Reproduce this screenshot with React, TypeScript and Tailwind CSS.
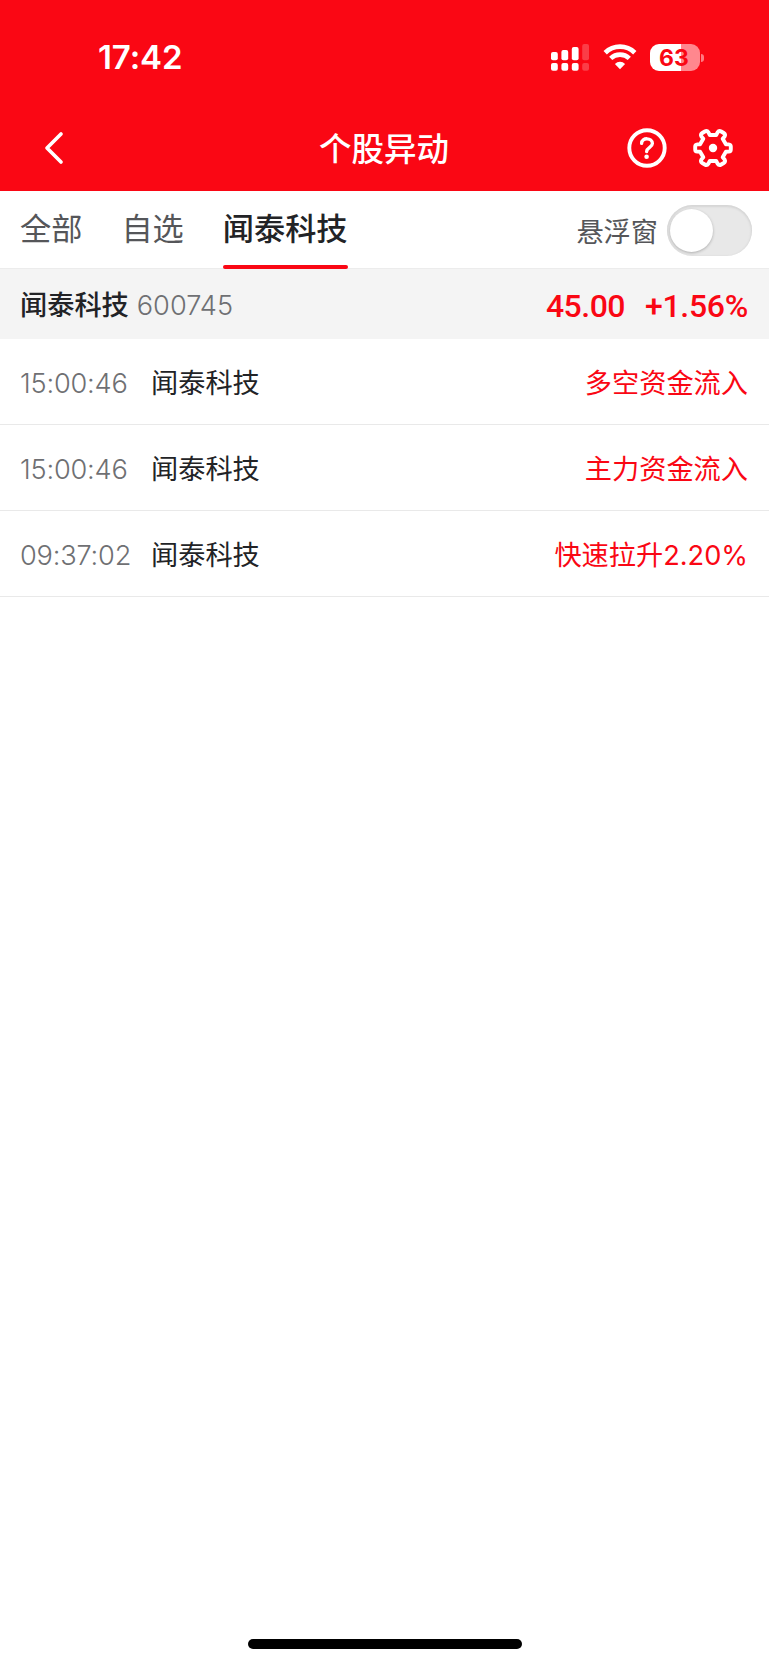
import { useState } from "react";

const tabs = ["全部", "自选", "闻泰科技"];

const events = [
  { time: "15:00:46", name: "闻泰科技", signal: "多空资金流入" },
  { time: "15:00:46", name: "闻泰科技", signal: "主力资金流入" },
  { time: "09:37:02", name: "闻泰科技", signal: "快速拉升2.20%" },
];

function SignalIcon() {
  return (
    <svg width="38" height="27" viewBox="0 0 38 27" fill="#fff">
      <rect x="0" y="8" width="6.8" height="8.2" rx="2" />
      <rect x="10.4" y="6" width="6.8" height="10.2" rx="2" />
      <rect x="20.8" y="3" width="6.8" height="13.2" rx="2" />
      <rect x="31.2" y="0" width="6.8" height="16.2" rx="2" opacity="0.22" />
      <rect x="0" y="19" width="6.8" height="7.8" rx="2" />
      <rect x="10.4" y="19" width="6.8" height="7.8" rx="2" />
      <rect x="20.8" y="19" width="6.8" height="7.8" rx="2" />
      <rect x="31.2" y="19" width="6.8" height="7.8" rx="2" opacity="0.22" />
    </svg>
  );
}

function WifiIcon() {
  return (
    <svg width="34" height="26" viewBox="0 0 34 26" fill="none">
      <path d="M2.2 8.7A21.3 21.3 0 0 1 31.8 8.7" stroke="#fff" strokeWidth="4.8" />
      <path d="M7.7 14.4A13.4 13.4 0 0 1 26.3 14.4" stroke="#fff" strokeWidth="4.6" />
      <path d="M17 25.2L11.9 19.9A7.3 7.3 0 0 1 22.1 19.9Z" fill="#fff" />
    </svg>
  );
}

function GearIcon() {
  return (
    <svg width="42" height="42" viewBox="-21 -21 42 42" fill="none">
      <path
        d="M-3.2 -13L3.2 -13L4.6 -15.6Q6 -17.8 8.2 -16.5L10.7 -15Q12.9 -13.6 11.6 -11.6L9.7 -9.3L12.9 -3.7L15.6 -3.6Q17.8 -3.4 17.8 -1.4L17.8 1.4Q17.8 3.4 15.6 3.6L12.9 3.7L9.7 9.3L11.6 11.6Q12.9 13.6 10.7 15L8.2 16.5Q6 17.8 4.6 15.6L3.2 13L-3.2 13L-4.6 15.6Q-6 17.8 -8.2 16.5L-10.7 15Q-12.9 13.6 -11.6 11.6L-9.7 9.3L-12.9 3.7L-15.6 3.6Q-17.8 3.4 -17.8 1.4L-17.8 -1.4Q-17.8 -3.4 -15.6 -3.6L-12.9 -3.7L-9.7 -9.3L-11.6 -11.6Q-12.9 -13.6 -10.7 -15L-8.2 -16.5Q-6 -17.8 -4.6 -15.6Z"
        stroke="#fff"
        strokeWidth="3.9"
        strokeLinejoin="round"
      />
      <circle r="4.2" fill="#fff" />
    </svg>
  );
}

function HelpIcon() {
  return (
    <svg width="42" height="42" viewBox="-21 -21 42 42" fill="none">
      <circle r="17.7" stroke="#fff" strokeWidth="3.9" />
      <path
        d="M-5.4 -4.6C-5.4 -10.8 5.4 -10.8 5.4 -4.4C5.4 -0.6 -0.2 -0.6 -0.4 3.6"
        stroke="#fff"
        strokeWidth="3.3"
        strokeLinecap="round"
      />
      <circle cx="-0.4" cy="8.8" r="2.3" fill="#fff" />
    </svg>
  );
}

function StatusBar() {
  return (
    <div className="flex h-[104px] items-start justify-between pl-[98px] pr-[65px] pt-[38px]">
      <span className="text-[33px] font-semibold leading-[38px] tracking-[-0.1px]">17:42</span>
      <div className="flex pt-[6px]">
        <SignalIcon />
        <div className="ml-[14px]">
          <WifiIcon />
        </div>
        <div className="ml-[13px] flex h-[27px] items-center">
          <div className="flex h-[27px] w-[50px] items-center justify-center rounded-[9px] bg-[linear-gradient(90deg,#fff_62%,#ff878e_62%)] pr-[2px] pt-px text-[23px] font-bold leading-none text-[#fa0714]">
            63
          </div>
          <div className="ml-[1px] h-[8px] w-[3px] rounded-r-full bg-[#ff7a82]" />
        </div>
      </div>
    </div>
  );
}

export default function App() {
  const [active, setActive] = useState("闻泰科技");
  const [floating, setFloating] = useState(false);

  return (
    <div className="flex h-[1665px] w-[769px] flex-col bg-white font-['Inter','Noto_Sans_CJK_SC',sans-serif] text-[#222326]">
      <header className="h-[191px] bg-[#fa0714] text-white">
        <StatusBar />
        <div className="grid h-[87px] grid-cols-[200px_1fr_200px] items-center">
          <button type="button" aria-label="返回" className="pl-[43px]">
            <svg width="22" height="34" viewBox="0 0 22 34" fill="none">
              <path d="M18 3L4 17L18 31" stroke="#fff" strokeWidth="3.7" strokeLinecap="round" strokeLinejoin="round" />
            </svg>
          </button>
          <h1 className="pr-px pt-[5px] text-center text-[32.5px] font-medium leading-[48px]">个股异动</h1>
          <div className="flex justify-end gap-6 pr-[35px]">
            <HelpIcon />
            <GearIcon />
          </div>
        </div>
      </header>

      <div className="flex h-[77px] items-stretch justify-between pl-5 pr-[17px]">
        <nav className="flex gap-[39px]">
          {tabs.map((tab) => (
            <button
              key={tab}
              type="button"
              onClick={() => setActive(tab)}
              className={`flex flex-col justify-between text-[31.2px] leading-[46px] ${
                active === tab ? "font-medium text-[#222326]" : "text-[#555659]"
              }`}
            >
              <span className="pt-[15px]">{tab}</span>
              {active === tab && <span className="relative -mb-px h-1 w-full rounded-[2px] bg-[#fa0714]" />}
            </button>
          ))}
        </nav>
        <div className="flex items-center gap-[9px] pt-px">
          <span className="pt-[5px] text-[27.2px] leading-10 text-[#555659]">悬浮窗</span>
          <button
            type="button"
            role="switch"
            aria-label="悬浮窗"
            aria-checked={floating}
            onClick={() => setFloating(!floating)}
            className={`flex h-[51px] w-[85px] items-center rounded-full px-[3px] shadow-[inset_0_1px_2px_1px_#d6d6d6] ${
              floating ? "justify-end bg-[#fa0714]" : "bg-[#e8e8e8]"
            }`}
          >
            <span className="h-[43px] w-[43px] rounded-full bg-white shadow-[0_1px_3px_rgba(0,0,0,0.25)]" />
          </button>
        </div>
      </div>

      <div className="flex h-[71px] items-center justify-between border-t border-[#ececec] bg-[#f4f4f4] pl-5 pr-[21px] pt-[3px]">
        <div className="flex items-center pt-px text-[27.2px]">
          <span className="font-medium">闻泰科技</span>
          <span className="ml-2 font-light text-[#6f7073]">600745</span>
        </div>
        <div className="flex gap-5 font-['Roboto',sans-serif] text-[32px] font-medium tracking-[-0.3px] text-[#fa0714]">
          <span className="tracking-[-0.5px]">45.00</span>
          <span>+1.56%</span>
        </div>
      </div>

      <ul className="text-[27.2px]">
        {events.map((event, i) => (
          <li key={i} className="flex h-[86px] items-center border-b border-[#e9e9e9] pl-5 pr-[21px] pt-[5px]">
            <span className="w-[131px] font-light tracking-[-0.2px] text-[#6f7073]">{event.time}</span>
            <span>{event.name}</span>
            <span className="ml-auto text-[#fa0714]">{event.signal}</span>
          </li>
        ))}
      </ul>

      <div className="mx-auto mb-4 mt-auto h-[10px] w-[274px] rounded-full bg-black" />
    </div>
  );
}
